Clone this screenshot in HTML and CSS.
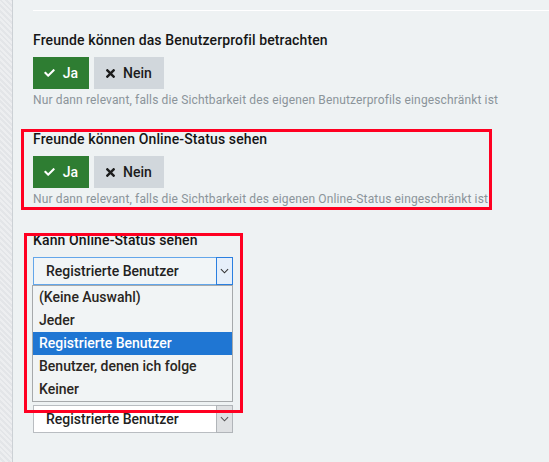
FILE: index.html
```html
<!DOCTYPE html>
<html lang="de">
<head>
<meta charset="utf-8">
<title>Privatsphäre</title>
<link rel="stylesheet" href="styles.css">
</head>
<body>
<div class="page">
  <aside class="rail"></aside>
  <main class="content">
    <hr class="sep">

    <section class="field field-first">
      <h3 class="label">Freunde können das Benutzerprofil betrachten</h3>
      <div class="toggle">
        <button class="btn btn-yes"><svg class="ico" viewBox="0 64 512 384" width="11" height="8"><path fill="#fff" d="M173.898 439.404l-166.4-166.4c-9.997-9.997-9.997-26.206 0-36.204l36.203-36.204c9.997-9.998 26.207-9.998 36.204 0L192 312.69 432.095 72.596c9.997-9.997 26.207-9.997 36.204 0l36.203 36.204c9.997 9.997 9.997 26.206 0 36.204l-294.4 294.401c-9.998 9.997-26.207 9.997-36.204-.001z"/></svg>Ja</button>
        <button class="btn btn-no"><svg class="ico" viewBox="0 80 352 352" width="9" height="9"><path fill="#1c1c1c" d="M242.72 256l100.07-100.07c12.28-12.28 12.28-32.19 0-44.48l-22.24-22.24c-12.28-12.28-32.19-12.28-44.48 0L176 189.28 75.93 89.21c-12.28-12.28-32.19-12.28-44.48 0L9.21 111.45c-12.28 12.28-12.28 32.19 0 44.48L109.28 256 9.21 356.07c-12.28 12.28-12.28 32.19 0 44.48l22.24 22.24c12.28 12.28 32.2 12.28 44.48 0L176 322.72l100.07 100.07c12.28 12.28 32.2 12.28 44.48 0l22.24-22.24c12.28-12.28 12.28-32.19 0-44.48L242.72 256z"/></svg>Nein</button>
      </div>
      <p class="help">Nur dann relevant, falls die Sichtbarkeit des eigenen Benutzerprofils eingeschränkt ist</p>
    </section>

    <section class="field field-marked">
      <h3 class="label">Freunde können Online-Status sehen</h3>
      <div class="toggle">
        <button class="btn btn-yes"><svg class="ico" viewBox="0 64 512 384" width="11" height="8"><path fill="#fff" d="M173.898 439.404l-166.4-166.4c-9.997-9.997-9.997-26.206 0-36.204l36.203-36.204c9.997-9.998 26.207-9.998 36.204 0L192 312.69 432.095 72.596c9.997-9.997 26.207-9.997 36.204 0l36.203 36.204c9.997 9.997 9.997 26.206 0 36.204l-294.4 294.401c-9.998 9.997-26.207 9.997-36.204-.001z"/></svg>Ja</button>
        <button class="btn btn-no"><svg class="ico" viewBox="0 80 352 352" width="9" height="9"><path fill="#1c1c1c" d="M242.72 256l100.07-100.07c12.28-12.28 12.28-32.19 0-44.48l-22.24-22.24c-12.28-12.28-32.19-12.28-44.48 0L176 189.28 75.93 89.21c-12.28-12.28-32.19-12.28-44.48 0L9.21 111.45c-12.28 12.28-12.28 32.19 0 44.48L109.28 256 9.21 356.07c-12.28 12.28-12.28 32.19 0 44.48l22.24 22.24c12.28 12.28 32.2 12.28 44.48 0L176 322.72l100.07 100.07c12.28 12.28 32.2 12.28 44.48 0l22.24-22.24c12.28-12.28 12.28-32.19 0-44.48L242.72 256z"/></svg>Nein</button>
      </div>
      <p class="help">Nur dann relevant, falls die Sichtbarkeit des eigenen Online-Status eingeschränkt ist</p>
    </section>

    <section class="field field-select">
      <h3 class="label">Kann Online-Status sehen</h3>
      <div class="select-wrap">
        <div class="select select-open">
          <span class="select-value">Registrierte Benutzer</span>
          <span class="select-arrow"><svg viewBox="0 0 10 6" width="9" height="6"><path d="M1 1 L5 5 L9 1" fill="none" stroke="#333" stroke-width="1.2"/></svg></span>
        </div>
        <ul class="dropdown">
          <li class="opt">(Keine Auswahl)</li>
          <li class="opt">Jeder</li>
          <li class="opt opt-active">Registrierte Benutzer</li>
          <li class="opt">Benutzer, denen ich folge</li>
          <li class="opt">Keiner</li>
        </ul>
      </div>
    </section>

    <div class="select select-next">
      <span class="select-value">Registrierte Benutzer</span>
      <span class="select-arrow"><svg viewBox="0 0 10 6" width="9" height="6"><path d="M1 1 L5 5 L9 1" fill="none" stroke="#555" stroke-width="1.2"/></svg></span>
    </div>
  </main>
</div>
</body>
</html>
```
FILE: styles.css
```css
html, body {
  margin: 0;
  padding: 0;
}
body {
  font-family: Roboto, "Liberation Sans", sans-serif;
  background: #eef2f3;
  color: #1b1b1b;
}
.page {
  display: flex;
  min-height: 462px;
}
.rail {
  width: 12px;
  flex: none;
  border-right: 1px solid #ccd1d5;
  background-color: #e3e5e8;
  background-image: repeating-linear-gradient(45deg, rgba(255,255,255,0.35) 0 2px, transparent 2px 4px);
}
.content {
  flex: 1;
  padding: 10px 0 0 20px;
}
.sep {
  margin: 0;
  border: 0;
  height: 1px;
  background: #ffffff;
}
.field {
  position: relative;
}
.field-first {
  margin-top: 20px;
}
.field-marked {
  margin-top: 22px;
}
.field-select {
  margin-top: 24px;
}
.label {
  margin: 0;
  font-size: 14px;
  line-height: 18px;
  font-weight: 500;
  letter-spacing: 0.12px;
  color: #161616;
}
.toggle {
  display: flex;
  gap: 5px;
  margin-top: 8px;
}
.btn {
  height: 32px;
  border: 0;
  margin: 0;
  padding: 0;
  display: inline-flex;
  align-items: center;
  justify-content: center;
  gap: 8px;
  font-family: Roboto, "Liberation Sans", sans-serif;
  font-size: 14px;
  font-weight: 500;
}
.btn-yes {
  width: 56px;
  background: #2e7d32;
  color: #ffffff;
}
.btn-no {
  width: 70px;
  background: #d1d7dc;
  color: #1c1c1c;
}
.ico {
  display: block;
}
.help {
  margin: 4px 0 0;
  font-size: 12px;
  line-height: 15px;
  letter-spacing: 0.14px;
  color: #8b949a;
}
.field-marked::after {
  content: "";
  position: absolute;
  left: -12px;
  top: -1px;
  width: 471px;
  height: 81px;
  box-sizing: border-box;
  border: 3px solid #ff0021;
  pointer-events: none;
}
.field-select::after {
  content: "";
  position: absolute;
  left: -9px;
  top: 2px;
  width: 219px;
  height: 180px;
  box-sizing: border-box;
  border: 3px solid #ff0021;
  pointer-events: none;
  z-index: 3;
}
.select-wrap {
  position: relative;
  margin-top: 8px;
  width: 200px;
}
.select {
  box-sizing: border-box;
  width: 200px;
  height: 28px;
  display: flex;
  align-items: stretch;
  font-size: 14px;
  font-weight: 500;
}
.select-value {
  flex: 1;
  display: flex;
  align-items: center;
  padding-left: 12px;
}
.select-arrow {
  width: 17px;
  box-sizing: border-box;
  display: flex;
  align-items: center;
  justify-content: center;
}
.select-open {
  border: 1px solid #63a6ea;
  border-right: 0;
  background: #f1f5f7;
  color: #222;
}
.select-open .select-arrow {
  background: #e6effa;
  border: 1px solid #2a7fe0;
  margin: -1px 0;
}
.dropdown {
  position: absolute;
  left: -1px;
  top: 28px;
  width: 201px;
  box-sizing: border-box;
  margin: 0;
  padding: 0;
  list-style: none;
  border: 1px solid #a6a9ab;
  background: #f1f4f5;
  z-index: 2;
}
.opt {
  height: 23px;
  line-height: 23px;
  padding-left: 6px;
  font-size: 14px;
  font-weight: 500;
  color: #2a2622;
}
.opt-active {
  background: #1f76d3;
  color: #ffffff;
}
.select-next {
  margin-top: 120px;
  border: 1px solid #b9bdc1;
  border-right: 0;
  background: #ffffff;
  color: #222;
}
.select-next .select-arrow {
  background: #dfe1e3;
  border: 1px solid #b1b5b9;
  margin: -1px 0;
}
```
